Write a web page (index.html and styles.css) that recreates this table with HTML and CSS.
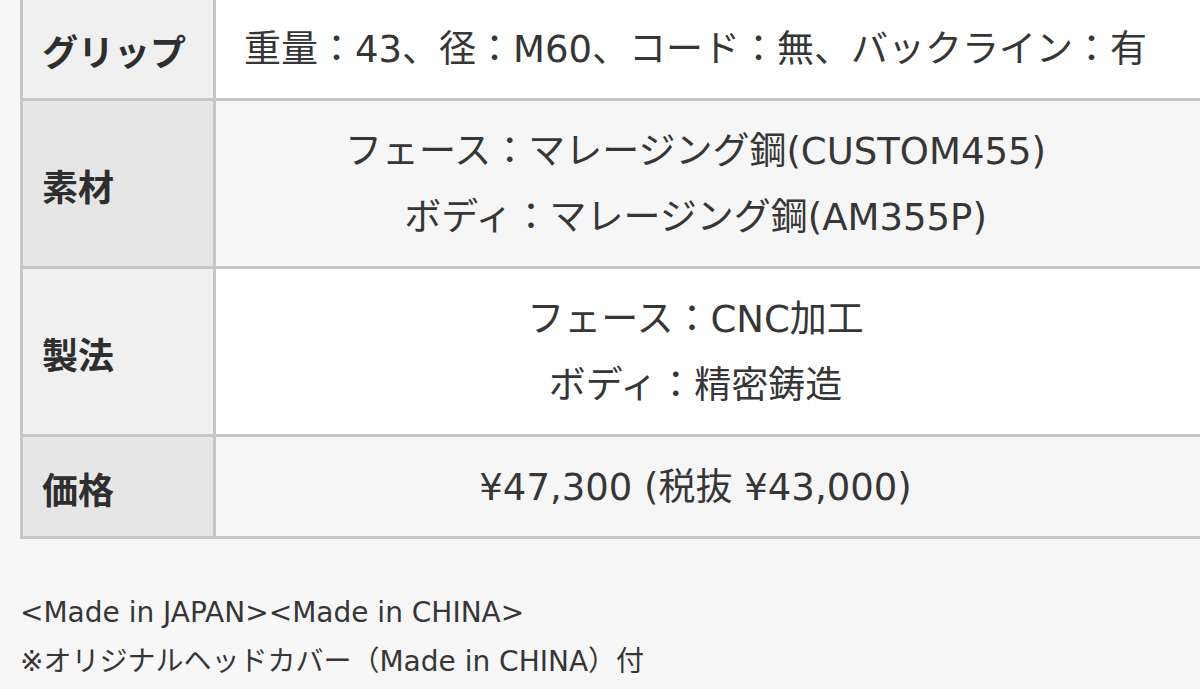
FILE: index.html
```html
<!DOCTYPE html>
<html lang="ja">
<head>
<meta charset="utf-8">
<link rel="stylesheet" href="styles.css">
</head>
<body>
<div class="page">
  <table class="spec">
    <colgroup><col class="c-head"><col class="c-data"></colgroup>
    <tbody>
      <tr class="odd">
        <th>グリップ</th>
        <td>重量：43、径：M60、コード：無、バックライン：有</td>
      </tr>
      <tr class="even">
        <th>素材</th>
        <td>フェース：マレージング鋼(CUSTOM455)<br>ボディ：マレージング鋼(AM355P)</td>
      </tr>
      <tr class="odd">
        <th>製法</th>
        <td>フェース：CNC加工<br>ボディ：精密鋳造</td>
      </tr>
      <tr class="even">
        <th>価格</th>
        <td>¥47,300 (税抜 ¥43,000)</td>
      </tr>
    </tbody>
  </table>
  <p class="note">&lt;Made in JAPAN&gt;&lt;Made in CHINA&gt;<br>※オリジナルヘッドカバー（Made in CHINA）付</p>
</div>
</body>
</html>
```
FILE: styles.css
```css
html, body {
  margin: 0;
  padding: 0;
  background: #f7f7f7;
  overflow: hidden;
}
body {
  font-family: "DejaVu Sans", "Noto Sans CJK JP", sans-serif;
  color: #363636;
}
.page {
  padding-left: 20px;
  margin-top: -4px;
}
.spec {
  border-collapse: collapse;
  table-layout: fixed;
  width: 1220px;
  border: 3px solid #c6c6c6;
}
.c-head { width: 193px; }
.spec th, .spec td {
  border: 3px solid #c6c6c6;
  font-size: 37px;
  line-height: 66px;
  padding: 18px 0 15px;
  vertical-align: middle;
}
.spec th {
  text-align: left;
  font-weight: 700;
  font-size: 36px;
  padding-left: 19px;
  color: #2e2e2e;
  font-family: "Noto Sans CJK JP", sans-serif;
}
.spec td {
  text-align: center;
  font-weight: 400;
  padding-left: 0;
  padding-right: 62px;
  white-space: nowrap;
}
.odd th { background: #f0f0f0; }
.even th { background: #e6e6e6; }
.odd td { background: #ffffff; }
.even td { background: #f6f6f6; }
.note {
  margin: 49px 0 0;
  font-size: 28px;
  line-height: 49px;
  color: #363636;
}
```
